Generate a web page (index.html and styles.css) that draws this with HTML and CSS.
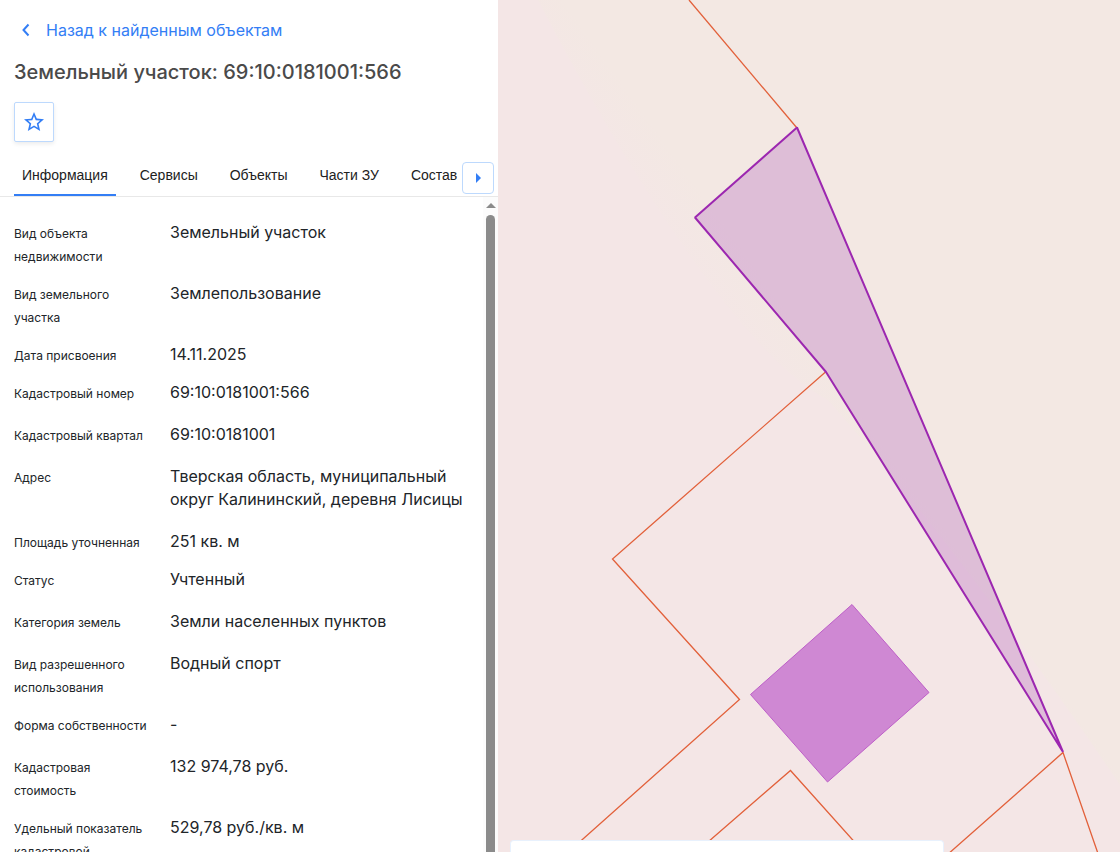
FILE: index.html
```html
<!DOCTYPE html>
<html lang="ru">
<head>
<meta charset="utf-8">
<meta name="viewport" content="width=device-width, initial-scale=1">
<title>Земельный участок: 69:10:0181001:566</title>
<link rel="stylesheet" href="styles.css">
</head>
<body>
<div class="app">
  <aside class="panel">
    <header class="head">
      <a class="back" href="#results">
        <svg class="back-icon" viewBox="0 0 24 24" aria-hidden="true"><path d="M14.500 6.500 9.500 12l5 5.500"/></svg>
        Назад к найденным объектам
      </a>
      <h1 class="title">Земельный участок: 69:10:0181001:566</h1>
      <button class="favorite" type="button" aria-label="В избранное">
        <svg viewBox="0 0 24 24" aria-hidden="true"><path d="M22 9.24l-7.19-.62L12 2 9.19 8.63 2 9.24l5.46 4.73L5.82 21 12 17.27 18.18 21l-1.63-7.03L22 9.24zM12 15.4l-3.76 2.27 1-4.28-3.32-2.88 4.38-.38L12 6.1l1.71 4.04 4.38.38-3.32 2.88 1 4.28L12 15.4z"/></svg>
      </button>
    </header>
    <nav class="tabs">
      <div class="tab-list">
        <a class="tab tab-active" href="#info">Информация</a>
        <a class="tab" href="#services">Сервисы</a>
        <a class="tab" href="#objects">Объекты</a>
        <a class="tab" href="#parts">Части ЗУ</a>
        <a class="tab" href="#content">Состав</a>
      </div>
      <button class="tabs-next" type="button" aria-label="Следующие вкладки">
        <svg viewBox="0 0 6 10" aria-hidden="true"><path d="M1 0v10l5-5z"/></svg>
      </button>
    </nav>
    <div class="body">
      <dl class="fields">
        <div class="field"><dt>Вид объекта недвижимости</dt><dd>Земельный участок</dd></div>
        <div class="field"><dt>Вид земельного участка</dt><dd>Землепользование</dd></div>
        <div class="field"><dt>Дата присвоения</dt><dd>14.11.2025</dd></div>
        <div class="field field-tall"><dt>Кадастровый номер</dt><dd>69:10:0181001:566</dd></div>
        <div class="field field-tall"><dt>Кадастровый квартал</dt><dd>69:10:0181001</dd></div>
        <div class="field field-tall"><dt>Адрес</dt><dd>Тверская область, муниципальный округ Калининский, деревня Лисицы</dd></div>
        <div class="field"><dt>Площадь уточненная</dt><dd>251 кв. м</dd></div>
        <div class="field field-tall"><dt>Статус</dt><dd>Учтенный</dd></div>
        <div class="field field-tall"><dt>Категория земель</dt><dd>Земли населенных пунктов</dd></div>
        <div class="field"><dt>Вид разрешенного использования</dt><dd>Водный спорт</dd></div>
        <div class="field field-tall"><dt>Форма собственности</dt><dd>-</dd></div>
        <div class="field"><dt>Кадастровая стоимость</dt><dd>132 974,78 руб.</dd></div>
        <div class="field"><dt>Удельный показатель кадастровой стоимости</dt><dd>529,78 руб./кв. м</dd></div>
      </dl>
      <div class="scrollbar" aria-hidden="true">
        <svg class="scroll-arrow" viewBox="0 0 10 5"><path d="M0 5h10L5 0z"/></svg>
        <div class="scroll-thumb"></div>
      </div>
    </div>
  </aside>
  <main class="map">
    <svg class="map-canvas" viewBox="0 0 622 852" preserveAspectRatio="xMinYMin slice" role="img" aria-label="Карта участка">
      <defs>
        <linearGradient id="ground" gradientUnits="userSpaceOnUse" x1="290" y1="418" x2="340" y2="382">
          <stop offset="0" stop-color="#f4e6e6"/>
          <stop offset="1" stop-color="#f3e8e3"/>
        </linearGradient>
      </defs>
      <rect width="622" height="852" fill="#f4e6e6"/>
      <path fill="url(#ground)" d="M40 0Q120 155 197 263T330 400Q470 560 622 785V0z"/>
      <g class="parcel">
        <path d="M191 0 299 128"/>
        <path d="M327.500 372 114.500 559 241.500 699.500 67 855"/>
        <path d="M195 855 292.500 770.500 370 857"/>
        <path d="M449 855 565 752.500 600.500 855"/>
      </g>
      <path class="building" d="M354 604.500 431 692.500 329.500 782 252.500 694.500z"/>
      <path class="selected" d="M299 127.500 197 217.500 328 372 565 752z"/>
    </svg>
    <div class="map-card"></div>
  </main>
</div>
</body>
</html>
```
FILE: styles.css
```css
* {
  box-sizing: border-box;
}

body {
  margin: 0;
  background: #fff;
  color: #212529;
  font: 16px/23px Inter, sans-serif;
}

.app {
  display: flex;
  height: 100vh;
  overflow: hidden;
}

.panel {
  display: flex;
  flex-direction: column;
  flex: 0 0 498px;
  min-width: 0;
  min-height: 0;
  background: #fff;
}

.head {
  display: flex;
  flex-direction: column;
  align-items: flex-start;
  padding: 18px 14px 0;
}

.back {
  display: flex;
  align-items: center;
  gap: 8px;
  line-height: 24px;
  color: #337ef5;
  text-decoration: none;
}

.back-icon {
  width: 24px;
  height: 24px;
  fill: none;
  stroke: #337ef5;
  stroke-width: 2;
}

.title {
  margin: 16px 0;
  font-size: 20px;
  font-weight: 500;
  line-height: 28px;
  color: #4a4a4a;
}

.favorite,
.tabs-next {
  display: flex;
  align-items: center;
  justify-content: center;
  padding: 0;
  border: 1px solid #bdd9fd;
  background: #fff;
  fill: #337ef5;
  cursor: pointer;
}

.favorite {
  width: 40px;
  height: 40px;
  border-radius: 2px;
  box-shadow: 0 2px 4px rgba(0, 0, 0, 0.08);
}

.favorite svg {
  width: 24px;
  height: 24px;
}

.tabs {
  display: flex;
  justify-content: space-between;
  margin-top: 14px;
  padding: 0 4px 0 14px;
  border-bottom: 1px solid #e8e8e8;
}

.tab-list {
  display: flex;
  flex: 1;
  gap: 16px;
  min-width: 0;
  overflow: hidden;
}

.tab {
  padding: 9px 8px;
  border-bottom: 2px solid transparent;
  font-family: "Liberation Sans", Arial, sans-serif;
  font-size: 14px;
  line-height: 20px;
  color: #212121;
  text-decoration: none;
  white-space: nowrap;
}

.tab-active {
  border-color: #337ef5;
}

.tabs-next {
  flex: none;
  width: 32px;
  height: 32px;
  margin-top: 6px;
  border-radius: 4px;
}

.tabs-next svg {
  width: 6px;
  height: 10px;
}

.body {
  display: flex;
  flex: 1;
  min-height: 0;
  overflow: hidden;
}

.fields {
  flex: 1;
  margin: 0;
  padding: 24px 14px;
}

.field {
  display: grid;
  grid-template-columns: 140px 1fr;
  gap: 16px;
  margin-bottom: 15px;
}

.field-tall {
  padding-bottom: 4px;
}

.field dt {
  padding-top: 1px;
  margin-bottom: -1px;
  font-size: 12px;
}

.field dd {
  margin: 0;
}

.scrollbar {
  display: flex;
  flex-direction: column;
  align-items: center;
  gap: 7px;
  flex: 0 0 15px;
  padding-top: 6px;
  background: #fcfcfc;
}

.scroll-arrow {
  flex: none;
  width: 10px;
  height: 5px;
  fill: #8b8b8b;
}

.scroll-thumb {
  flex: 1;
  width: 9px;
  border-radius: 5px 5px 0 0;
  background: #8b8b8b;
}

.map {
  position: relative;
  flex: 1;
  min-width: 0;
  background: #f4e6e6;
}

.map-canvas {
  display: block;
  width: 100%;
  height: 100%;
}

.parcel {
  fill: none;
  stroke: #e2603a;
  stroke-width: 1.3;
}

.building {
  fill: #cf88d3;
  stroke: #bd5fc8;
}

.selected {
  fill: #9427ae;
  fill-opacity: 0.22;
  stroke: #9c27b0;
  stroke-width: 2;
  stroke-linejoin: bevel;
}

.map-card {
  position: absolute;
  bottom: 0;
  left: 12px;
  width: 434px;
  height: 12px;
  border: 1px solid #e8f1fd;
  border-bottom: 0;
  border-radius: 4px 4px 0 0;
  background: #fff;
}
```
